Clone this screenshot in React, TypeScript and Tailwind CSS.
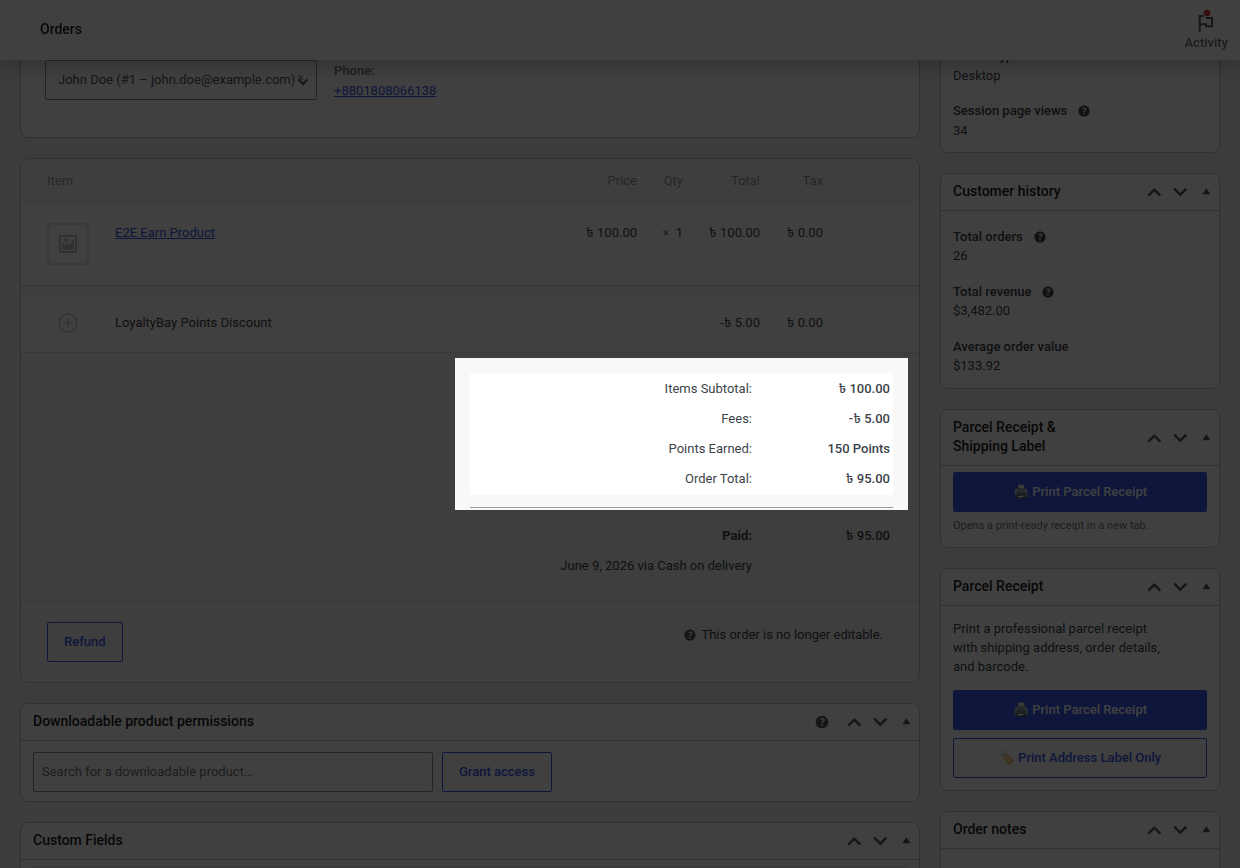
import type { ReactNode } from "react";

const earnings = [
  { label: "Items Subtotal:", value: "৳\u00a0100.00" },
  { label: "Fees:", value: "-৳\u00a05.00" },
  { label: "Points Earned:", value: "150 Points" },
  { label: "Order Total:", value: "৳\u00a095.00" },
];

const history = [
  { label: "Total orders", value: "26", help: true },
  { label: "Total revenue", value: "$3,482.00", help: true },
  { label: "Average order value", value: "$133.92", help: false },
];

function HelpIcon({ className = "size-4" }: { className?: string }) {
  return (
    <svg viewBox="0 0 20 20" fill="currentColor" className={`shrink-0 ${className}`} aria-hidden="true">
      <path d="M17 10c0-3.87-3.14-7-7-7-3.87 0-7 3.13-7 7s3.13 7 7 7c3.86 0 7-3.13 7-7zm-6.3 1.48H9.14v-.43c0-.38.08-.7.24-.98s.46-.57.88-.89c.41-.29.68-.53.81-.71.14-.18.2-.39.2-.62 0-.25-.09-.44-.28-.58-.19-.13-.45-.19-.79-.19-.58 0-1.25.15-2 .46l-.64-1.28c.87-.49 1.8-.74 2.77-.74.81 0 1.45.2 1.92.58.48.39.71.91.71 1.55 0 .43-.09.8-.29 1.11-.19.32-.57.67-1.11 1.06-.38.28-.61.49-.71.63-.1.15-.15.34-.15.57v.46zm-1.47 2.72c-.18-.17-.27-.42-.27-.73 0-.33.08-.58.26-.75s.43-.25.77-.25c.32 0 .57.09.75.26s.27.42.27.74c0 .3-.09.55-.27.72-.18.18-.43.27-.75.27-.33 0-.58-.09-.76-.26z" />
    </svg>
  );
}

function PanelActions() {
  return (
    <div className="flex shrink-0 items-center text-[#50575e]">
      <button type="button" aria-label="Move up" className="flex h-9 w-[26px] items-center justify-center">
        <svg viewBox="0 0 20 20" className="size-5" fill="none" stroke="currentColor" strokeWidth="2.4">
          <path d="M4.300 13.700l6-6 6 6" />
        </svg>
      </button>
      <button type="button" aria-label="Move down" className="flex h-9 w-[26px] items-center justify-center">
        <svg viewBox="0 0 20 20" className="size-5" fill="none" stroke="currentColor" strokeWidth="2.4">
          <path d="M4.300 6.700l6 6 6-6" />
        </svg>
      </button>
      <button type="button" aria-label="Toggle panel" className="flex h-9 w-[26px] items-center justify-center">
        <svg viewBox="0 0 20 20" className="size-5" fill="currentColor">
          <path d="M6.400 12.300l4-6 4 6z" />
        </svg>
      </button>
    </div>
  );
}

function Panel({ title, help, children }: { title: ReactNode; help?: boolean; children?: ReactNode }) {
  return (
    <section className="rounded-lg border border-[#c3c4c7] bg-white">
      <div className="flex items-center justify-between border-b border-[#c3c4c7]">
        <h2 className="pt-2 pb-[9px] pl-3 text-sm leading-[19px] font-medium text-[#1e1e1e]">{title}</h2>
        <div className="flex items-center">
          {help && <HelpIcon className="mr-[10px] size-[18px] text-[#50575e]" />}
          <PanelActions />
        </div>
      </div>
      {children}
    </section>
  );
}

function PrintButton() {
  return (
    <button type="button" className="h-10 w-full rounded-xs bg-[#3858e9] font-medium text-white">
      🖨️ Print Parcel Receipt
    </button>
  );
}

function Header() {
  return (
    <header className="fixed inset-x-0 top-0 z-10 flex h-[60px] items-center justify-between bg-white pr-3 pl-10 shadow-[0_8px_16px_0_rgba(85,93,102,0.3)]">
      <h1 className="pb-0.5 text-sm leading-5 font-medium text-[#1e1e1e]">Orders</h1>
      <button type="button" className="flex flex-col items-center gap-px pt-px font-medium text-[#757575]">
        <svg viewBox="0 0 24 24" className="size-6" fill="none" stroke="#50575e" strokeWidth="2" aria-hidden="true">
          <path d="M9.500 8H5.700v15.500M5.700 16.300H12v2h6V10h-6" />
          <circle cx="13" cy="5" r="3.300" fill="#d63638" stroke="none" />
        </svg>
        <span className="leading-5">Activity</span>
      </button>
    </header>
  );
}

function CustomerCard() {
  return (
    <section className="rounded-b-lg border border-t-0 border-[#c3c4c7] bg-white px-6 pt-[60px] pb-9">
      <div className="flex gap-[17px]">
        <div className="relative w-[272px]">
          <select aria-label="Customer" className="h-10 w-full appearance-none rounded-xs border border-[#8c8f94] bg-white pl-3 text-[#50575e]">
            <option>John Doe (#1 – john.doe@example.com)</option>
          </select>
          <span className="pointer-events-none absolute top-[10px] right-[13px] leading-4 text-[#8c8f94]">×</span>
          <svg viewBox="0 0 12 12" className="pointer-events-none absolute top-[15px] right-2 size-3" fill="none" stroke="#50575e" strokeWidth="2">
            <path d="M1.500 4.500L6 9l4.500-4.500" />
          </svg>
        </div>
        <div className="pt-px leading-5 text-[#777777]">
          <p className="font-medium">Phone:</p>
          <a href="tel:+8801808066138" className="text-[#3858e9] underline">+8801808066138</a>
        </div>
      </div>
    </section>
  );
}

function ItemsTable() {
  return (
    <table className="w-full table-fixed text-right leading-5 text-[#444444]">
      <colgroup>
        <col className="w-[94px]" />
        <col />
        <col className="w-[90px]" />
        <col className="w-[46px]" />
        <col className="w-[77px]" />
        <col className="w-[63px]" />
        <col className="w-[96px]" />
      </colgroup>
      <thead>
        <tr className="h-[46px] bg-[#f8f8f8] text-[#999999] [&>th]:pb-0.5">
          <th colSpan={2} className="pl-[26px] text-left font-normal">Item</th>
          <th className="font-normal">Price</th>
          <th className="font-normal">Qty</th>
          <th className="font-normal">Total</th>
          <th className="font-normal">Tax</th>
          <th />
        </tr>
      </thead>
      <tbody>
        <tr className="h-20 align-top">
          <td className="pt-[18px] pl-[26px]">
            <div className="flex size-[42px] items-center justify-center border-2 border-[#e8e8e8] text-[#c3c3c3]">
              <svg viewBox="0 0 20 20" className="size-5" fill="currentColor" aria-hidden="true">
                <path d="M2.250 1h15.500c.69 0 1.250.56 1.250 1.250v15.500c0 .69-.56 1.250-1.250 1.250H2.250C1.560 19 1 18.440 1 17.750V2.250C1 1.560 1.560 1 2.250 1zM17 17V3H3v14h14zM10 6c0-1.100-.9-2-2-2s-2 .9-2 2 .9 2 2 2 2-.9 2-2zm3 5s0-6 3-6v10c0 .55-.45 1-1 1H5c-.55 0-1-.45-1-1V8c2 0 3 4 3 4s1-3 3-3 3 2 3 2z" />
              </svg>
            </div>
          </td>
          <td className="pt-[18px] text-left">
            <a href="#product" className="text-[#3858e9] underline">E2E Earn Product</a>
          </td>
          <td className="pt-[18px]">৳&nbsp;100.00</td>
          <td className="pt-[18px]"><span className="mr-[3px] text-[#888888]">×</span> 1</td>
          <td className="pt-[18px]">৳&nbsp;100.00</td>
          <td className="pt-[18px]">৳&nbsp;0.00</td>
          <td />
        </tr>
      </tbody>
      <tbody>
        <tr className="h-[9px] border-t border-[#d0d0d0] bg-[#f8f8f8]">
          <td colSpan={7} />
        </tr>
        <tr className="h-[58px]">
          <td className="pl-[26px]">
            <div className="flex w-[42px] justify-center text-[#cccccc]">
              <svg viewBox="0 0 20 20" className="size-5" fill="none" stroke="currentColor" strokeWidth="1.5" aria-hidden="true">
                <circle cx="10" cy="10" r="9" />
                <path d="M10 5v10M5 10h10" />
              </svg>
            </div>
          </td>
          <td className="text-left">LoyaltyBay Points Discount</td>
          <td />
          <td />
          <td>-৳&nbsp;5.00</td>
          <td>৳&nbsp;0.00</td>
          <td />
        </tr>
      </tbody>
    </table>
  );
}

function OrderTotals() {
  return (
    <div className="border-y border-[#dfdfdf] bg-[#f8f8f8] px-[26px] py-5">
      <div className="relative ml-auto w-1/2 bg-white py-px">
        <table className="w-full text-right leading-[30px] text-[#3c434a]">
          <tbody>
            {earnings.map((row) => (
              <tr key={row.label}>
                <th scope="row" className="font-normal">{row.label}</th>
                <td className="w-[141px] pr-[3px] font-medium">{row.value}</td>
              </tr>
            ))}
          </tbody>
        </table>
        {/* Spotlight: the spread shadow dims everything outside of the box */}
        <div className="pointer-events-none absolute -inset-[15px] z-50 shadow-[0_0_0_9999px_rgba(0,0,0,0.75)]" />
      </div>
      <div className="mt-3 ml-auto w-1/2 border-t border-[#999999] pt-[13px]">
        <table className="w-full text-right leading-[30px] text-[#3c434a]">
          <tbody>
            <tr className="font-medium">
              <th scope="row">Paid:</th>
              <td className="w-[141px] pr-[3px]">৳&nbsp;95.00</td>
            </tr>
            <tr>
              <td>June 9, 2026 via Cash on delivery</td>
              <td />
            </tr>
          </tbody>
        </table>
      </div>
    </div>
  );
}

export default function App() {
  return (
    <div className="h-screen overflow-hidden bg-[#f0f0f1] font-['Roboto','Noto_Sans_Bengali','Noto_Sans',sans-serif] text-[13px] text-[#3c434a]">
      <Header />
      <main className="flex items-start gap-5 px-5">
        <div className="flex min-w-0 flex-1 flex-col gap-5">
          <CustomerCard />

          <section className="rounded-lg border border-[#c3c4c7] bg-[#f8f8f8]">
            <div className="rounded-t-lg bg-white [&_thead_th:first-child]:rounded-tl-lg [&_thead_th:last-child]:rounded-tr-lg">
              <ItemsTable />
            </div>
            <OrderTotals />
            <div className="flex items-start justify-between px-[26px] py-5">
              <button type="button" className="h-10 rounded-xs border border-[#3858e9] px-4 font-medium text-[#3858e9]">Refund</button>
              <p className="flex items-center gap-[3px] pt-[3px] pr-[10px] leading-5">
                <HelpIcon className="size-4 text-[#50575e]" />
                This order is no longer editable.
              </p>
            </div>
          </section>

          <Panel title="Downloadable product permissions" help>
            <div className="flex gap-[9px] px-3 pt-[11px] pb-[9px]">
              <input
                type="text"
                aria-label="Search for a downloadable product"
                placeholder="Search for a downloadable product…"
                className="h-10 w-[400px] rounded-xs border border-[#8c8f94] bg-white px-2 pb-0.5 placeholder:text-[#757575]"
              />
              <button type="button" className="h-10 rounded-xs border border-[#3858e9] px-4 font-medium text-[#3858e9]">Grant access</button>
            </div>
          </Panel>

          <Panel title="Custom Fields">
            <div className="px-3 pt-[6px] pb-3">
              <div className="h-20 border border-[#dcdcde] bg-[#f8f8f8]" />
            </div>
          </Panel>
        </div>

        <aside className="flex w-[280px] shrink-0 flex-col gap-5">
          <section className="rounded-b-lg border border-t-0 border-[#c3c4c7] bg-white px-3 pt-[46px] pb-[11px] leading-5">
            <h3 className="font-medium">Device type</h3>
            <p>Desktop</p>
            <h3 className="mt-[15px] flex items-center gap-[9px] font-medium">
              Session page views <HelpIcon />
            </h3>
            <p>34</p>
          </section>

          <Panel title="Customer history">
            <div className="flex flex-col gap-[17px] px-3 pt-4 pb-[13px] leading-[19px]">
              {history.map((h) => (
                <div key={h.label}>
                  <h3 className="flex items-center gap-[9px] font-medium">
                    {h.label} {h.help && <HelpIcon />}
                  </h3>
                  <p>{h.value}</p>
                </div>
              ))}
            </div>
          </Panel>

          <Panel title={<>Parcel Receipt &amp;<br />Shipping Label</>}>
            <div className="px-3 pt-[6px] pb-3">
              <PrintButton />
              <p className="mt-[5px] text-[11px] leading-[18px] text-[#757575]">Opens a print-ready receipt in a new tab.</p>
            </div>
          </Panel>

          <Panel title="Parcel Receipt">
            <div className="px-3 pt-[13px] pb-3">
              <p className="pr-10 leading-[19px]">Print a professional parcel receipt with shipping address, order details, and barcode.</p>
              <div className="mt-[14px] flex flex-col gap-2">
                <PrintButton />
                <button type="button" className="h-10 w-full rounded-xs border border-[#3858e9] font-medium text-[#3858e9]">
                  🏷️ Print Address Label Only
                </button>
              </div>
            </div>
          </Panel>

          <Panel title="Order notes">
            <div className="h-24" />
          </Panel>
        </aside>
      </main>
    </div>
  );
}
